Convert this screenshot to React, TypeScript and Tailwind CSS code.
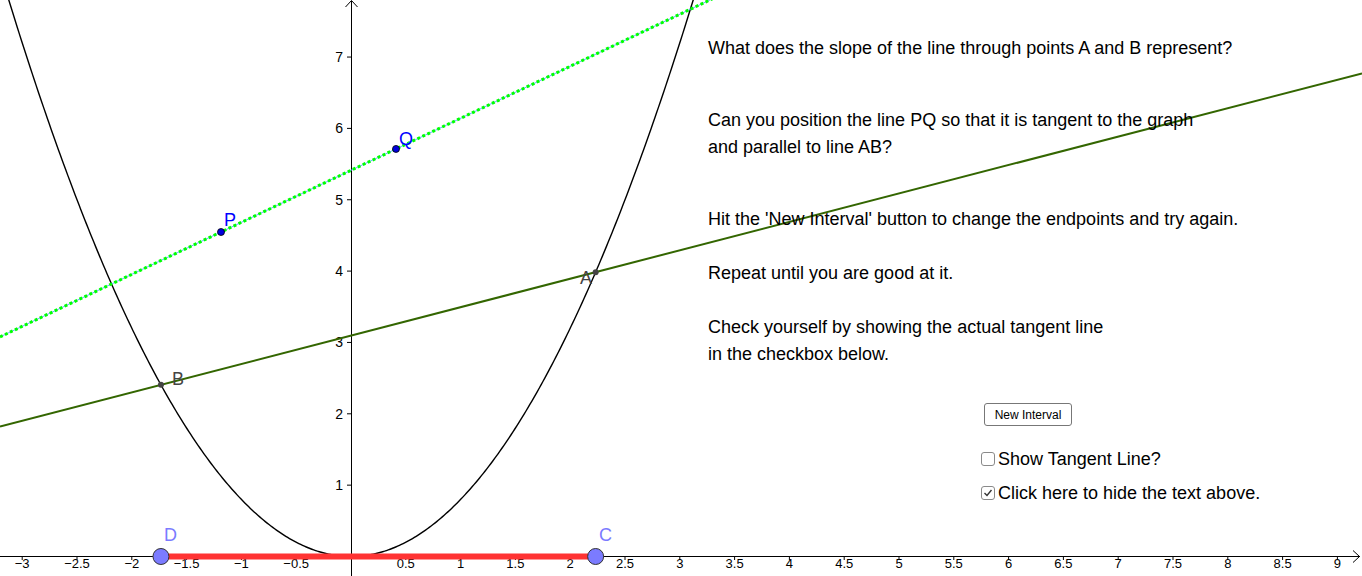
import React from "react";

const X = (x: number) => 351 + 109.6 * x;
const Y = (y: number) => 556.5 - 71.35 * y;

const f = (x: number) => 0.8 * x * x;

function parabolaPath() {
  const pts: string[] = [];
  for (let i = 0; i <= 400; i++) {
    const x = -3.4 + (6.8 * i) / 400;
    pts.push(`${i === 0 ? "M" : "L"}${X(x).toFixed(2)},${Y(f(x)).toFixed(2)}`);
  }
  return pts.join(" ");
}

const xA = 2.232;
const xB = -1.734;
const A = { x: xA, y: f(xA) };
const B = { x: xB, y: f(xB) };
const slopeAB = (A.y - B.y) / (A.x - B.x);
const lineAB = (x: number) => A.y + slopeAB * (x - A.x);

const P = { x: -1.186, y: 4.548 };
const Q = { x: 0.4106, y: 5.712 };
const slopePQ = (Q.y - P.y) / (Q.x - P.x);
const linePQ = (x: number) => P.y + slopePQ * (x - P.x);

const xMin = (0 - 351) / 109.6;
const xMax = (1362 - 351) / 109.6;

function fmt(v: number) {
  const s = String(Math.abs(v));
  return v < 0 ? "\u2212" + s : s;
}

function Graph() {
  const xTicks: number[] = [];
  for (let k = -6; k <= 18; k++) {
    if (k !== 0) xTicks.push(k / 2);
  }
  const yTicks = [1, 2, 3, 4, 5, 6, 7];
  return (
    <svg width={1362} height={576} className="absolute left-0 top-0">
      <line x1={0} y1={556.5} x2={1360} y2={556.5} stroke="#000" strokeWidth={1} />
      <polyline points="1353,550.5 1359.5,556.5 1353,562.5" fill="none" stroke="#000" strokeWidth={1} />
      <line x1={351.5} y1={1} x2={351.5} y2={576} stroke="#000" strokeWidth={1} />
      <polyline points="345.5,7 351.5,0.5 357.5,7" fill="none" stroke="#000" strokeWidth={1} />
      {xTicks.map((t) => (
        <g key={t}>
          <line x1={X(t)} y1={556.5} x2={X(t)} y2={560} stroke="#000" strokeWidth={1} />
          <text
            x={X(t)}
            y={568}
            textAnchor="middle"
            fontSize={13}
            fontFamily="'Liberation Sans', Arial, sans-serif"
            fill="#000"
          >
            {fmt(t)}
          </text>
        </g>
      ))}
      {yTicks.map((t) => (
        <g key={t}>
          <line x1={347} y1={Y(t)} x2={351.5} y2={Y(t)} stroke="#000" strokeWidth={1} />
          <text
            x={343}
            y={Y(t) + 5}
            textAnchor="end"
            fontSize={14}
            fontFamily="'Liberation Sans', Arial, sans-serif"
            fill="#000"
          >
            {t}
          </text>
        </g>
      ))}
      <path d={parabolaPath()} fill="none" stroke="#000" strokeWidth={1.4} />
      <line
        x1={X(xMin)}
        y1={Y(lineAB(xMin))}
        x2={X(xMax)}
        y2={Y(lineAB(xMax))}
        stroke="#336600"
        strokeWidth={2}
      />
      <line
        x1={X(xMin)}
        y1={Y(linePQ(xMin))}
        x2={X(xMax)}
        y2={Y(linePQ(xMax))}
        stroke="#66b3ff"
        strokeWidth={1}
      />
      <line
        x1={X(xMin)}
        y1={Y(linePQ(xMin))}
        x2={X(xMax)}
        y2={Y(linePQ(xMax))}
        stroke="#00ff00"
        strokeWidth={3}
        strokeDasharray="3 2.5"
      />
      <line x1={X(xB)} y1={556.5} x2={X(xA)} y2={556.5} stroke="#ff3333" strokeWidth={6} />
      <circle cx={X(A.x)} cy={Y(A.y)} r={3} fill="#444" />
      <circle cx={X(B.x)} cy={Y(B.y)} r={3} fill="#444" />
      <circle cx={X(P.x)} cy={Y(P.y)} r={3.5} fill="#0000dd" stroke="#000" strokeWidth={0.8} />
      <circle cx={X(Q.x)} cy={Y(Q.y)} r={3.5} fill="#0000dd" stroke="#000" strokeWidth={0.8} />
      <circle cx={X(xB)} cy={556.5} r={8} fill="#7b7bff" stroke="#333" strokeWidth={1} />
      <circle cx={X(xA)} cy={556.5} r={8} fill="#7b7bff" stroke="#333" strokeWidth={1} />
      <g fontFamily="'Liberation Sans', Arial, sans-serif" fontSize={18}>
        <text x={580} y={284} fill="#444">A</text>
        <text x={172} y={385} fill="#444">B</text>
        <text x={224} y={226} fill="#0000ff">P</text>
        <text x={399} y={145} fill="#0000ff">Q</text>
        <text x={164} y={541} fill="#7b7bff">D</text>
        <text x={599} y={541} fill="#7b7bff">C</text>
      </g>
    </svg>
  );
}

function Checkbox({ checked }: { checked: boolean }) {
  return (
    <span className="flex h-[14px] w-[14px] items-center justify-center rounded-[3px] border border-[#8a8a8a] bg-white">
      {checked && (
        <svg width={10} height={10} viewBox="0 0 10 10">
          <polyline points="1.5,5 4,7.5 8.5,2" fill="none" stroke="#333" strokeWidth={1.4} />
        </svg>
      )}
    </span>
  );
}

export default function App() {
  return (
    <div
      className="relative h-[576px] w-[1362px] overflow-hidden bg-white text-black"
      style={{ fontFamily: "'Liberation Sans', Arial, sans-serif" }}
    >
      <Graph />
      <div className="absolute left-[708px] top-[35px] flex flex-col text-[18px] leading-[27px]">
        <p>What does the slope of the line through points A and B represent?</p>
        <p className="mt-[45px]">
          Can you position the line PQ so that it is tangent to the graph
          <br />
          and parallel to line AB?
        </p>
        <p className="mt-[45px]">Hit the 'New Interval' button to change the endpoints and try again.</p>
        <p className="mt-[27px]">Repeat until you are good at it.</p>
        <p className="mt-[27px]">
          Check yourself by showing the actual tangent line
          <br />
          in the checkbox below.
        </p>
      </div>
      <div className="absolute left-[981px] top-[403px] flex flex-col items-start">
        <button className="ml-[3px] flex h-[23px] w-[88px] items-center justify-center rounded-[3px] border border-[#777] bg-white text-[12px] text-black">
          New Interval
        </button>
        <div className="mt-[23px] flex items-center gap-[3px] text-[18px] leading-[20px]">
          <Checkbox checked={false} />
          <span>Show Tangent Line?</span>
        </div>
        <div className="mt-[14px] flex items-center gap-[3px] text-[18px] leading-[20px]">
          <Checkbox checked={true} />
          <span>Click here to hide the text above.</span>
        </div>
      </div>
    </div>
  );
}
